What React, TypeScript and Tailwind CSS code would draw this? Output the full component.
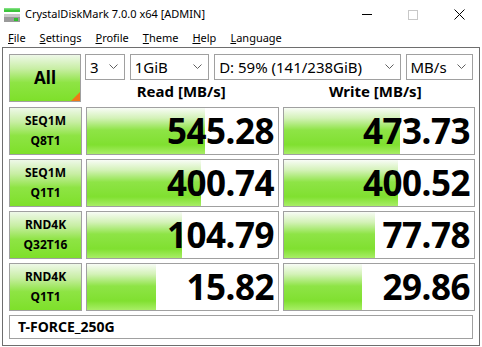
import React from 'react';

const rows = [
  { l1: 'SEQ1M', l2: 'Q8T1', read: '545.28', rw: 118, write: '473.73', ww: 116 },
  { l1: 'SEQ1M', l2: 'Q1T1', read: '400.74', rw: 114, write: '400.52', ww: 114 },
  { l1: 'RND4K', l2: 'Q32T16', read: '104.79', rw: 95, write: '77.78', ww: 91 },
  { l1: 'RND4K', l2: 'Q1T1', read: '15.82', rw: 69, write: '29.86', ww: 78 },
];

const barBg =
  'bg-[linear-gradient(to_bottom,#f8fcf6_0%,#d4f2b8_22%,#8ee446_48%,#80e030_80%,#a8ee66_100%)]';
const btnBg =
  'bg-[linear-gradient(to_bottom,#eef8e8_0%,#c8eea4_30%,#8ee444_60%,#7ee02a_100%)]';

function Chevron() {
  return (
    <svg width="9" height="6" viewBox="0 0 9 6" className="shrink-0">
      <polyline points="0.5,0.5 4.5,4.5 8.5,0.5" fill="none" stroke="#606060" strokeWidth="1" />
    </svg>
  );
}

function Combo({ text, w }: { text: string; w: string }) {
  return (
    <div className={`${w} h-[26px] border border-[#a0a0a0] bg-white flex items-center justify-between pl-[4px] pr-[6px] text-[15px] text-black`}>
      <span>{text}</span>
      <Chevron />
    </div>
  );
}

function Cell({ value, fill }: { value: string; fill: number }) {
  return (
    <div className="relative h-[48px] border border-[#a0a0a0] bg-white overflow-hidden">
      <div className={`absolute left-0 top-0 bottom-0 ${barBg}`} style={{ width: fill }} />
      <div className="relative h-full flex items-center justify-end pr-[4px] text-[35px] font-bold text-black leading-none tracking-[-0.5px]">
        {value}
      </div>
    </div>
  );
}

export default function App() {
  return (
    <div className="w-[482px] h-[347px] bg-white font-['Noto_Sans',sans-serif] text-black overflow-hidden">
      {/* title bar */}
      <div className="h-[29px] flex items-center">
        <svg width="18" height="16" viewBox="0 0 18 16" className="ml-[3px] mr-[4px]">
          <rect x="1" y="1" width="16" height="4" fill="#3cc43c" />
          <rect x="1" y="1" width="16" height="1.5" fill="#7ee07e" />
          <rect x="1" y="7" width="16" height="8" fill="#9a9a9a" />
          <rect x="1" y="7" width="16" height="3" fill="#c8c8c8" />
          <rect x="11" y="11" width="4" height="3" fill="#2ec02e" />
        </svg>
        <span className="text-[11px]">CrystalDiskMark 7.0.0 x64 [ADMIN]</span>
        <div className="ml-auto flex items-center h-full">
          <div className="w-[46px] h-full flex items-center justify-center">
            <div className="w-[10px] h-px bg-black" />
          </div>
          <div className="w-[46px] h-full flex items-center justify-center">
            <div className="w-[10px] h-[10px] border border-[#c8c8c8]" />
          </div>
          <div className="w-[46px] h-full flex items-center justify-center">
            <svg width="11" height="11" viewBox="0 0 11 11">
              <path d="M0.5 0.5 L10.5 10.5 M10.5 0.5 L0.5 10.5" stroke="#000" strokeWidth="1" />
            </svg>
          </div>
        </div>
      </div>

      {/* menu */}
      <div className="h-[18px] flex items-center text-[11px] pl-[8px] gap-[14px]">
        <span><u>F</u>ile</span>
        <span><u>S</u>ettings</span>
        <span><u>P</u>rofile</span>
        <span><u>T</u>heme</span>
        <span><u>H</u>elp</span>
        <span><u>L</u>anguage</span>
      </div>

      {/* client frame */}
      <div className="mx-[2px] h-[299px] border border-[#6e6e6e] px-[6px] pt-[6px] flex flex-col gap-[4px]">
        <div className="flex gap-[4px]">
          <div className={`relative w-[73px] h-[48px] border border-[#a0a0a0] ${btnBg} flex items-center justify-center text-[17px] font-bold`}>
            All
            <div className="absolute right-0 bottom-0 w-0 h-0 border-l-[9px] border-l-transparent border-b-[9px] border-b-[#f07818]" />
          </div>
          <div className="flex flex-col w-[388px]">
            <div className="flex gap-[5px]">
              <Combo text="3" w="w-[40px]" />
              <Combo text="1GiB" w="w-[80px]" />
              <Combo text="D: 59% (141/238GiB)" w="w-[188px]" />
              <Combo text="MB/s" w="w-[68px]" />
            </div>
            <div className="flex flex-1 items-center text-[15px] font-bold">
              <div className="w-[193px] text-center">Read [MB/s]</div>
              <div className="w-[196px] text-center">Write [MB/s]</div>
            </div>
          </div>
        </div>

        {rows.map((r) => (
          <div key={r.l1 + r.l2} className="grid grid-cols-[73px_193px_192px] gap-[4px]">
            <div className={`h-[48px] border border-[#a0a0a0] ${btnBg} flex flex-col items-center justify-center text-[12px] font-bold leading-[20px]`}>
              <span>{r.l1}</span>
              <span>{r.l2}</span>
            </div>
            <Cell value={r.read} fill={r.rw} />
            <Cell value={r.write} fill={r.ww} />
          </div>
        ))}

        <div className="h-[24px] border border-[#a0a0a0] bg-white flex items-center pl-[8px] text-[14px] font-bold">
          T-FORCE_250G
        </div>
      </div>
    </div>
  );
}
